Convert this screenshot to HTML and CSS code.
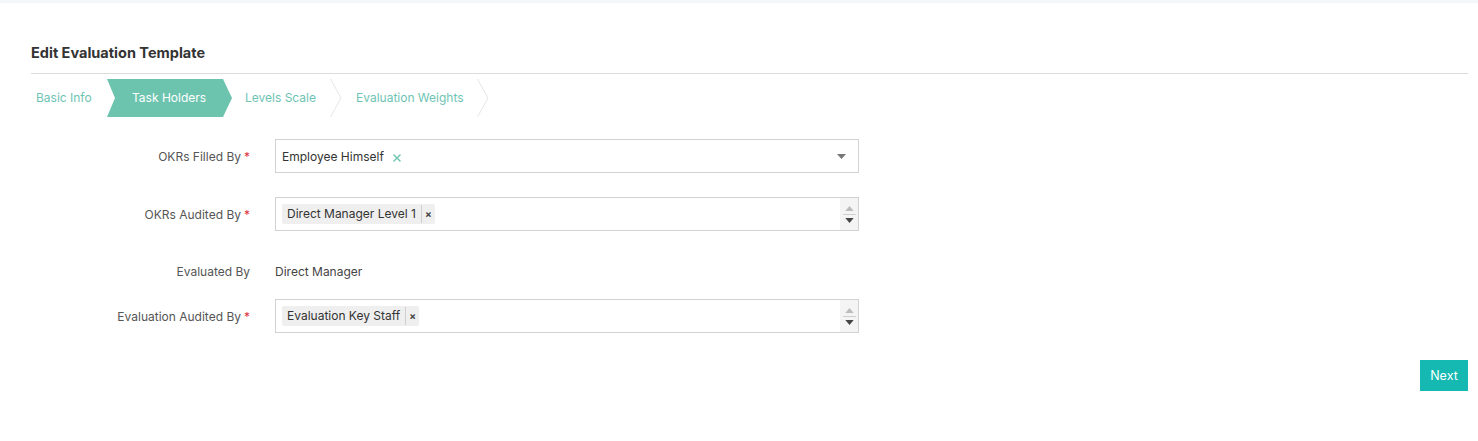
FILE: index.html
```html
<!DOCTYPE html>
<html>
<head>
<meta charset="utf-8">
<link rel="stylesheet" href="styles.css">
</head>
<body>
<div class="topbar"></div>
<div class="page">
  <h1 class="title">Edit Evaluation Template</h1>
  <div class="steps">
    <div class="step step-first">Basic Info</div>
    <div class="step step-active">Task Holders</div>
    <div class="step step-levels">Levels Scale</div>
    <svg class="sep" width="12" height="38" viewBox="0 0 12 38"><path d="M0.5 0 L11 19 L0.5 38" fill="none" stroke="#e6e6e6" stroke-width="1"/></svg>
    <div class="step step-weights">Evaluation Weights</div>
    <svg class="sep" width="12" height="38" viewBox="0 0 12 38"><path d="M0.5 0 L11 19 L0.5 38" fill="none" stroke="#e6e6e6" stroke-width="1"/></svg>
  </div>

  <div class="form">
    <div class="row">
      <div class="label">OKRs Filled By<span class="req">*</span></div>
      <div class="field select">
        <span class="value">Employee Himself</span>
        <svg class="clear" width="10" height="10" viewBox="0 0 10 10"><path d="M1.5 1.5 L8.5 8.5 M8.5 1.5 L1.5 8.5" stroke="#6cc4ae" stroke-width="1.4"/></svg>
        <svg class="caret" width="9" height="5" viewBox="0 0 9 5"><path d="M0 0 L9 0 L4.5 5 Z" fill="#777"/></svg>
      </div>
    </div>

    <div class="row">
      <div class="label">OKRs Audited By<span class="req">*</span></div>
      <div class="field multi">
        <span class="tag"><span class="tag-text">Direct Manager Level 1</span><span class="tag-x">×</span></span>
        <div class="spinner">
          <svg width="10" height="6" viewBox="0 0 10 6"><path d="M0 6 L10 6 L5 0 Z" fill="#bbb"/></svg>
          <span class="spin-line"></span>
          <svg width="10" height="6" viewBox="0 0 10 6"><path d="M0 0 L10 0 L5 6 Z" fill="#444"/></svg>
        </div>
      </div>
    </div>

    <div class="row row-static">
      <div class="label">Evaluated By</div>
      <div class="static">Direct Manager</div>
    </div>

    <div class="row row-last">
      <div class="label">Evaluation Audited By<span class="req">*</span></div>
      <div class="field multi">
        <span class="tag"><span class="tag-text">Evaluation Key Staff</span><span class="tag-x">×</span></span>
        <div class="spinner">
          <svg width="10" height="6" viewBox="0 0 10 6"><path d="M0 6 L10 6 L5 0 Z" fill="#bbb"/></svg>
          <span class="spin-line"></span>
          <svg width="10" height="6" viewBox="0 0 10 6"><path d="M0 0 L10 0 L5 6 Z" fill="#444"/></svg>
        </div>
      </div>
    </div>
  </div>

  <div class="actions">
    <button class="btn-next">Next</button>
  </div>
</div>
</body>
</html>
```

FILE: styles.css
```css
* { box-sizing: border-box; }
html, body { margin: 0; padding: 0; background: #fff; }
body {
  font-family: Inter, "Noto Sans", "Liberation Sans", sans-serif;
  font-size: 12px;
  color: #333;
}
.topbar {
  height: 3px;
  background: #f5f6fa;
}
.page {
  padding: 0 10px 0 31px;
}
.title {
  margin: 0;
  padding-top: 40px;
  height: 71px;
  font-size: 14.5px;
  font-weight: 700;
  color: #333;
  line-height: 20px;
  border-bottom: 1px solid #dcdcdc;
}
.steps {
  display: flex;
  align-items: center;
  height: 38px;
  margin-top: 5px;
}
.step {
  height: 38px;
  line-height: 38px;
  color: #6ec4b4;
  font-size: 12px;
  white-space: nowrap;
}
.step-first { padding-left: 5px; width: 76px; }
.step-active {
  width: 125px;
  padding-left: 25px;
  background: #6cc4ae;
  color: #fff;
  clip-path: polygon(0 0, 116px 0, 125px 50%, 116px 100%, 0 100%, 8px 50%);
}
.step-levels { padding-left: 13px; width: 98px; }
.sep { display: block; flex: none; }
.step-weights { padding-left: 14px; width: 135px; }

.form {
  margin-top: 22px;
}
.row {
  display: flex;
  align-items: center;
  margin-bottom: 24px;
}
.row-last { margin-bottom: 0; }
.label {
  width: 219px;
  text-align: right;
  color: #555;
  font-size: 12px;
  flex: none;
}
.req { color: #e0303a; margin-left: 3px; }
.field {
  margin-left: 25px;
  width: 584px;
  height: 34px;
  border: 1px solid #d2d2d2;
  display: flex;
  align-items: center;
  position: relative;
}
.select { padding-left: 6px; }
.select .value { color: #333; font-size: 12px; }
.clear { margin-left: 8px; margin-top: 3px; }
.caret { position: absolute; right: 12px; top: 14px; }
.multi { padding-left: 6px; }
.tag {
  display: inline-flex;
  align-items: center;
  height: 20px;
  background: #efefef;
  border-radius: 2px;
  font-size: 12px;
  color: #333;
}
.tag-text {
  padding: 0 5px;
  border-right: 1px solid #cfcfcf;
  line-height: 18px;
}
.tag-x {
  width: 13px;
  text-align: center;
  font-size: 10px;
  font-weight: 700;
  color: #444;
}
.spinner {
  position: absolute;
  right: 0;
  top: 0;
  bottom: 0;
  width: 18px;
  background: #f4f4f4;
  display: flex;
  flex-direction: column;
  align-items: center;
  justify-content: center;
  gap: 3px;
}
.spinner svg { display: block; width: 9px; height: 5px; }
.spin-line { width: 13px; height: 1px; background: #cfcfcf; }
.row-static {
  align-items: flex-start;
  height: 44px;
  padding-top: 7px;
  margin-bottom: 0;
  line-height: 20px;
}
.static {
  margin-left: 25px;
  color: #444;
  font-size: 12px;
}
.actions {
  display: flex;
  justify-content: flex-end;
  margin-top: 27px;
}
.btn-next {
  width: 48px;
  height: 31px;
  background: #16b9b1;
  color: #fff;
  border: none;
  font-family: Inter, "Noto Sans", "Liberation Sans", sans-serif;
  font-size: 12.5px;
  padding: 0;
}
```
